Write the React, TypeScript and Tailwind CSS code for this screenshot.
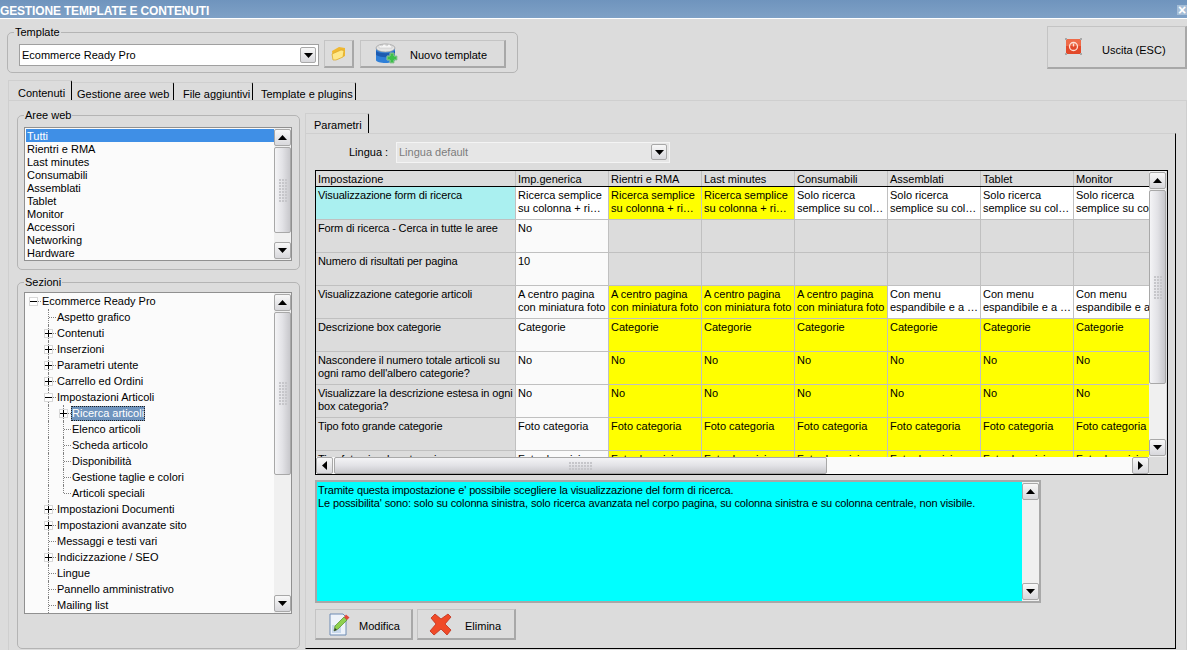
import type { ReactNode } from "react";

const font = "font-['Liberation_Sans',Arial,sans-serif]";

const ArrowUp = () => (
  <svg width="9" height="5" viewBox="0 0 9 5"><path d="M4.5 0 9 5H0z" fill="#000" /></svg>
);
const ArrowDown = () => (
  <svg width="9" height="5" viewBox="0 0 9 5"><path d="M0 0h9L4.5 5z" fill="#000" /></svg>
);
const ArrowLeft = () => (
  <svg width="5" height="9" viewBox="0 0 5 9"><path d="M5 0v9L0 4.500z" fill="#000" /></svg>
);
const ArrowRight = () => (
  <svg width="5" height="9" viewBox="0 0 5 9"><path d="M0 0l5 4.500L0 9z" fill="#000" /></svg>
);

const SbButton = ({ children, className = "" }: { children: ReactNode; className?: string }) => (
  <div className={`flex items-center justify-center shrink-0 rounded-[2px] border border-[#a8a8a8] bg-gradient-to-b from-[#f8f8f8] to-[#d8d8dc] ${className}`}>
    {children}
  </div>
);

const Gripper = ({ horizontal = false }: { horizontal?: boolean }) => (
  <div className={`grid gap-[1px] ${horizontal ? "grid-cols-8" : "grid-cols-3"}`}>
    {Array.from({ length: 24 }).map((_, i) => (
      <span key={i} className="w-[2px] h-[2px] bg-[#c6c6ca]" />
    ))}
  </div>
);

// vertical scrollbar, thumb size comes from the caller because each list has its own
const VScroll = ({ thumb }: { thumb: number }) => (
  <div className="w-[17px] shrink-0 flex flex-col py-[1px] bg-[#f0f0f0]">
    <SbButton className="h-[17px] w-[17px]"><ArrowUp /></SbButton>
    {thumb > 0 && (
      <div className="mt-[1px] shrink-0 flex items-center justify-center rounded-[2px] border border-[#a8a8a8] bg-gradient-to-r from-[#f4f4f6] via-[#e2e2e6] to-[#c8c8cc]" style={{ height: thumb }}>
        <Gripper />
      </div>
    )}
    <div className="flex-1" />
    <SbButton className="h-[17px] w-[17px]"><ArrowDown /></SbButton>
  </div>
);

const Combo = ({ text, disabled = false, className = "" }: { text: string; disabled?: boolean; className?: string }) => (
  <div className={`flex items-center border pl-[2px] pr-[1px] ${disabled ? "bg-[#e6e6e6] border-[#f4f4f4] text-[#7c7c7c]" : "bg-white border-[#a0a0a0] text-black"} ${className}`}>
    <span className="flex-1 whitespace-nowrap">{text}</span>
    <SbButton className="h-[16px] w-[16px] border-[#555] mr-[1px]"><ArrowDown /></SbButton>
  </div>
);

const ToolButton = ({ icon, label, labelClass = "", className = "" }: { icon: ReactNode; label?: string; labelClass?: string; className?: string }) => (
  <div className={`flex items-center border border-[#c4c4c4] border-r-2 border-b-2 border-r-[#a8a8a8] border-b-[#a8a8a8] bg-[#dcdcdc] ${className}`}>
    {icon}
    {label && <span className={`text-black whitespace-nowrap ${labelClass}`}>{label}</span>}
  </div>
);

const FolderIcon = () => (
  <svg width="15" height="15" viewBox="0 0 15 15">
    <path d="M1 5 8 1l6 1v8l-9 4H2z" fill="#f0b830" />
    <path d="M1 8l9-4 3 .5-1 6.500-7 3H2z" fill="#ffe88a" stroke="#d8a828" strokeWidth="0.7" />
  </svg>
);

const NewTemplateIcon = () => (
  <svg width="25" height="22" viewBox="0 0 25 22">
    <path d="M1 6c0-3 19-3 19 0v11c0 4-19 4-19 0z" fill="#2f7fd8" />
    <path d="M1 8c4 3 15 3 19 0v4c-6 3-13 3-19 0z" fill="#1d5bb0" />
    <ellipse cx="10.500" cy="5" rx="9.500" ry="4" fill="#e4e4e4" stroke="#9a9a9a" strokeWidth="0.7" />
    <path d="M4 5V2l3 1 2-2 3 2 2-2 2 2 1 0v2z" fill="#f6f6f6" stroke="#bdbdbd" strokeWidth="0.5" />
    <path d="M15 10h4v3h3v4h-3v3h-4v-3h-3v-4h3z" fill="#3cc04a" stroke="#e8f8e8" strokeWidth="0.8" />
    <path d="M15 10h4v3h3v4h-3v3h-4v-3h-3v-4h3z" fill="none" stroke="#1c7a26" strokeWidth="0.4" />
  </svg>
);

const PowerIcon = () => (
  <svg width="17" height="17" viewBox="0 0 17 17">
    <rect x="1" y="1" width="15" height="15" fill="#e2492a" />
    <rect x="1" y="1" width="15" height="7" fill="#ee6a48" />
    <path d="M0 0h2v2H0zM15 0h2v2h-2zM0 15h2v2H0zM15 15h2v2h-2z" fill="#a8a8a8" />
    <circle cx="8.500" cy="8.500" r="4" fill="none" stroke="#fde0d6" strokeWidth="1.300" />
    <path d="M8.500 5.500v3" stroke="#fde0d6" strokeWidth="1.300" />
  </svg>
);

const EditIcon = () => (
  <svg width="22" height="23" viewBox="0 0 22 23">
    <path d="M1 1h13l3 3v18H1z" fill="#eef3fa" stroke="#6f8cb4" />
    <rect x="3" y="12" width="9" height="8" fill="#c8d8ec" />
    <path d="M5 18l1-5L15 4l3 3-9 9z" fill="#8fd14f" stroke="#4f8f2a" strokeWidth="0.7" />
    <path d="M15 4l2-2.500 3.500 3L18 7z" fill="#e0483a" />
    <path d="M5 18l1-3 2 2z" fill="#333" />
  </svg>
);

const DeleteIcon = () => (
  <svg width="23" height="23" viewBox="0 0 23 23">
    <path d="M2 5 6 1l6 5 7-5 3 3-6 7 6 6-4 5-6-6-7 6-4-4 6-7z" fill="#f04a28" stroke="#c0301a" strokeWidth="0.8" />
  </svg>
);

const Group = ({ title, className = "", children }: { title: string; className?: string; children: ReactNode }) => (
  <fieldset className={`border border-[#b4b4b4] rounded-[5px] ${className}`}>
    <legend className="ml-[6px] px-[1px] h-[13px] leading-[13px] text-black">{title}</legend>
    {children}
  </fieldset>
);

const aree = ["Tutti", "Rientri e RMA", "Last minutes", "Consumabili", "Assemblati", "Tablet", "Monitor", "Accessori", "Networking", "Hardware"];

type TreeItem = { label: string; level: number; box?: "+" | "-"; last?: boolean; selected?: boolean };

const tree: TreeItem[] = [
  { label: "Ecommerce Ready Pro", level: 0, box: "-" },
  { label: "Aspetto grafico", level: 1 },
  { label: "Contenuti", level: 1, box: "+" },
  { label: "Inserzioni", level: 1, box: "+" },
  { label: "Parametri utente", level: 1, box: "+" },
  { label: "Carrello ed Ordini", level: 1, box: "+" },
  { label: "Impostazioni Articoli", level: 1, box: "-" },
  { label: "Ricerca articoli", level: 2, box: "+", selected: true },
  { label: "Elenco articoli", level: 2 },
  { label: "Scheda articolo", level: 2 },
  { label: "Disponibilità", level: 2 },
  { label: "Gestione taglie e colori", level: 2 },
  { label: "Articoli speciali", level: 2, last: true },
  { label: "Impostazioni Documenti", level: 1, box: "+" },
  { label: "Impostazioni avanzate sito", level: 1, box: "+" },
  { label: "Messaggi e testi vari", level: 1 },
  { label: "Indicizzazione / SEO", level: 1, box: "+" },
  { label: "Lingue", level: 1 },
  { label: "Pannello amministrativo", level: 1 },
  { label: "Mailing list", level: 1 },
];

const Connector = ({ item }: { item: TreeItem }) => (
  <span className="relative w-[15px] h-4 shrink-0">
    {item.level > 0 && (
      <span className={`absolute left-[7px] top-0 w-[8px] border-l border-dotted border-[#808080] ${item.last ? "h-[8px]" : "h-4"}`} />
    )}
    <span className="absolute left-[8px] top-[8px] w-[7px] border-t border-dotted border-[#808080]" />
    {item.box && (
      <span className="absolute left-[3px] top-[4px] w-[9px] h-[9px] bg-white border border-[#d8d8d8] flex items-center justify-center">
        <span className="relative w-[7px] h-[1px] bg-black">
          {item.box === "+" && <span className="absolute left-[3px] -top-[3px] w-[1px] h-[7px] bg-black" />}
        </span>
      </span>
    )}
  </span>
);

const TreeRow = ({ item }: { item: TreeItem }) => (
  <div className="flex items-center h-4 pl-[1px] whitespace-nowrap">
    {item.level >= 1 && <span className="w-[15px] shrink-0" />}
    {item.level === 2 && <span className="w-[8px] h-4 ml-[7px] shrink-0 border-l border-dotted border-[#808080]" />}
    <Connector item={item} />
    <span className={`px-[1px] h-[15px] leading-[15px] ${item.selected ? "bg-[#6f94be] text-white outline-1 outline-dotted outline-[#202020] -outline-offset-1" : "text-black"}`}>
      {item.label}
    </span>
  </div>
);

type Cell = { t?: string; c: "w" | "y" | "g" };

const w = (t: string): Cell => ({ t, c: "w" });
const y = (t: string): Cell => ({ t, c: "y" });
const g: Cell = { c: "g" };

const bgOf: Record<Cell["c"], string> = {
  w: "bg-white",
  y: "bg-[#ffff00]",
  g: "bg-[#dcdcdc]",
};

const solo = "Solo ricerca semplice su col…";
const rs = "Ricerca semplice su colonna + ri…";
const ac = "A centro pagina con miniatura foto";
const cm = "Con menu espandibile e a …";

const same = (t: string): Cell[] => Array.from({ length: 6 }, () => y(t));

const rows: { name: string; hl?: boolean; generic: string; genericWhite?: boolean; cells: Cell[] }[] = [
  { name: "Visualizzazione form di ricerca", hl: true, generic: rs, genericWhite: true, cells: [y(rs), y(rs), w(solo), w(solo), w(solo), w(solo)] },
  { name: "Form di ricerca - Cerca in tutte le aree", generic: "No", cells: [g, g, g, g, g, g] },
  { name: "Numero di risultati per pagina", generic: "10", cells: [g, g, g, g, g, g] },
  { name: "Visualizzazione categorie articoli", generic: ac, cells: [y(ac), y(ac), y(ac), w(cm), w(cm), w(cm)] },
  { name: "Descrizione box categorie", generic: "Categorie", cells: same("Categorie") },
  { name: "Nascondere il numero totale articoli su\nogni ramo dell'albero categorie?", generic: "No", cells: same("No") },
  { name: "Visualizzare la descrizione estesa in ogni\nbox categoria?", generic: "No", cells: same("No") },
  { name: "Tipo foto grande categorie", generic: "Foto categoria", cells: same("Foto categoria") },
  { name: "Tipo foto piccola categorie", generic: "Foto descrizione", cells: same("Foto descrizione") },
];

const headers = ["Imp.generica", "Rientri e RMA", "Last minutes", "Consumabili", "Assemblati", "Tablet", "Monitor"];

const GridCell = ({ bg, first = false, children }: { bg: string; first?: boolean; children?: ReactNode }) => (
  <div className={`${first ? "w-[200px] whitespace-pre tracking-[-0.14px]" : "w-[93px]"} pl-[2px] h-[33px] shrink-0 pt-[2px] pr-[1px] leading-[13px] border-r border-b border-[#c0c0c0] overflow-hidden ${bg}`}>
    {children}
  </div>
);

function Tab({ label, active = false, className = "" }: { label: string; active?: boolean; className?: string }) {
  return (
    <div className={`flex items-center shrink-0 whitespace-nowrap text-black border-t border-[#cfcfcf] border-r border-r-black rounded-tr-[2px] ${active ? "h-[20px] pt-[6px] border-l border-l-[#cfcfcf]" : "h-[18px] pt-[5px]"} ${className}`}>
      {label}
    </div>
  );
}

export default function App() {
  return (
    <div className={`w-[1187px] h-[650px] overflow-hidden flex flex-col bg-[#dcdcdc] text-[11px] ${font}`}>
      <div className="h-[19px] shrink-0 flex items-center justify-between border-b border-white bg-gradient-to-b from-[#6f94bd] to-[#7fa1c6]">
        <span className="pt-[4px] font-bold text-white text-[12px] tracking-[-0.16px] whitespace-nowrap">GESTIONE TEMPLATE E CONTENUTI</span>
        <span className="w-[10px] h-[10px] mt-[2px] flex items-center justify-center bg-[#a5bdd6] text-white font-bold text-[14px] leading-none">×</span>
      </div>

      <div className="h-[62px] shrink-0 flex pl-[7px]">
        <Group title="Template" className="mt-[7px] w-[511px] h-[47px]">
          <div className="flex items-start pl-[11px] pt-[1px]">
            <Combo text="Ecommerce Ready Pro" className="w-[300px] h-[22px] mt-[4px]" />
            <ToolButton icon={<FolderIcon />} className="w-[30px] h-[28px] ml-[5px] justify-center" />
            <ToolButton icon={<NewTemplateIcon />} label="Nuovo template" labelClass="mt-[4px]" className="w-[146px] h-[28px] ml-[6px] pl-[14px] gap-[10px]" />
          </div>
        </Group>
        <ToolButton
          icon={<span className="mb-[1px] flex"><PowerIcon /></span>}
          label="Uscita (ESC)"
          labelClass="mt-[6px]"
          className="ml-auto mt-[7px] w-[140px] h-[43px] pl-[17px] gap-[20px] border-r-0"
        />
      </div>

      <div className="h-[19px] shrink-0 flex items-end pl-[8px] relative z-10">
        <Tab active label="Contenuti" className="w-[64px] pl-[9px]" />
        <Tab label="Gestione aree web" className="w-[102px] pl-[5px]" />
        <Tab label="File aggiuntivi" className="w-[79px] pl-[9px]" />
        <Tab label="Template e plugins" className="w-[103px] pl-[8px]" />
      </div>

      <div className="flex-1 min-h-0 ml-[8px] flex border-t border-l border-r border-[#cfcfcf]">
        <div className="w-[291px] shrink-0 pl-[8px] pt-[8px] flex flex-col">
          <Group title="Aree web" className="w-[283px] h-[161px]">
            <div className="w-[268px] h-[134px] ml-[6px] mt-[5px] flex border border-[#909090] bg-[#fbfbfb] overflow-hidden">
              <div className="flex-1 pt-[1px] pl-[1px]">
                {aree.map((a, i) => (
                  <div key={a} className={`h-[13px] leading-[15px] pl-[1px] ${i === 0 ? "bg-[#3f8fe6] text-white" : "text-black"}`}>{a}</div>
                ))}
              </div>
              <VScroll thumb={86} />
            </div>
          </Group>
          <Group title="Sezioni" className="w-[283px] h-[373px] mt-[6px]">
            <div className="w-[268px] h-[322px] ml-[6px] mt-[3px] flex border border-[#909090] bg-[#fbfbfb] overflow-hidden">
              <div className="flex-1">
                {tree.map((item) => <TreeRow key={item.label} item={item} />)}
              </div>
              <VScroll thumb={163} />
            </div>
          </Group>
        </div>

        <div className="flex-1 min-w-0 pl-[5px] pt-[12px] flex flex-col pb-[1px]">
          <div className="h-[20px] pt-[4px] shrink-0 w-[64px] pl-[8px] flex items-center border-l border-t border-[#cfcfcf] border-r border-r-black rounded-tr-[2px] text-black">Parametri</div>
          <div className="w-[871px] flex-1 min-h-0 border-t border-l border-[#cfcfcf] border-r border-r-black border-b border-b-black pl-[9px] flex flex-col">
            <div className="h-[36px] shrink-0 flex items-center">
              <span className="w-[81px] pl-[34px] text-black">Lingua :</span>
              <Combo text="Lingua default" disabled className="w-[274px] h-[21px]" />
            </div>
            <div className="w-[853px] h-[305px] shrink-0 border border-black flex flex-col overflow-hidden">
              <div className="flex flex-1 min-h-0">
                <div className="w-[833px] overflow-hidden">
                  <div className="w-[851px] flex h-[16px] border-b border-black">
                    <div className="w-[200px] shrink-0 pl-[2px] leading-[16px] border-r border-[#c0c0c0]">Impostazione</div>
                    {headers.map((h) => (
                      <div key={h} className="w-[93px] shrink-0 pl-[2px] leading-[16px] border-r border-[#c0c0c0]">{h}</div>
                    ))}
                  </div>
                  {rows.map((r) => (
                    <div key={r.name} className="flex w-[851px]">
                      <GridCell first bg={r.hl ? "bg-[#aaf0f0]" : "bg-[#dcdcdc]"}>{r.name}</GridCell>
                      <GridCell bg={r.genericWhite ? "bg-white" : "bg-[#fafafa]"}>{r.generic}</GridCell>
                      {r.cells.map((c, i) => (
                        <GridCell key={i} bg={bgOf[c.c]}>{c.t}</GridCell>
                      ))}
                    </div>
                  ))}
                </div>
                <VScroll thumb={194} />
              </div>
              <div className="h-[17px] shrink-0 flex">
                <div className="w-[833px] flex bg-[#fafafa]">
                  <SbButton className="w-[17px] h-[17px]"><ArrowLeft /></SbButton>
                  <div className="w-[493px] ml-[1px] flex items-center justify-center rounded-[2px] border border-[#a8a8a8] bg-gradient-to-b from-[#f4f4f6] via-[#e2e2e6] to-[#c8c8cc]">
                    <Gripper horizontal />
                  </div>
                  <div className="flex-1" />
                  <SbButton className="w-[17px] h-[17px]"><ArrowRight /></SbButton>
                </div>
                <div className="flex-1 bg-[#dcdcdc]" />
              </div>
            </div>
            <div className="w-[726px] h-[123px] mt-[5px] shrink-0 border-2 border-[#a8a8a8] bg-[#00ffff] flex">
              <div className="flex-1 pl-[1px] pt-[2px] leading-[13px] tracking-[-0.13px] text-black">
                <div>Tramite questa impostazione e' possibile scegliere la visualizzazione del form di ricerca.</div>
                <div>Le possibilita' sono: solo su colonna sinistra, solo ricerca avanzata nel corpo pagina, su colonna sinistra e su colonna centrale, non visibile.</div>
              </div>
              <VScroll thumb={0} />
            </div>
            <div className="flex mt-[6px] gap-[4px]">
              <ToolButton icon={<EditIcon />} label="Modifica" labelClass="mt-[4px]" className="w-[98px] h-[31px] pl-[13px] gap-[8px]" />
              <ToolButton icon={<DeleteIcon />} label="Elimina" labelClass="mt-[4px]" className="w-[99px] h-[31px] pl-[11px] gap-[13px]" />
            </div>
          </div>
        </div>
      </div>
    </div>
  );
}
